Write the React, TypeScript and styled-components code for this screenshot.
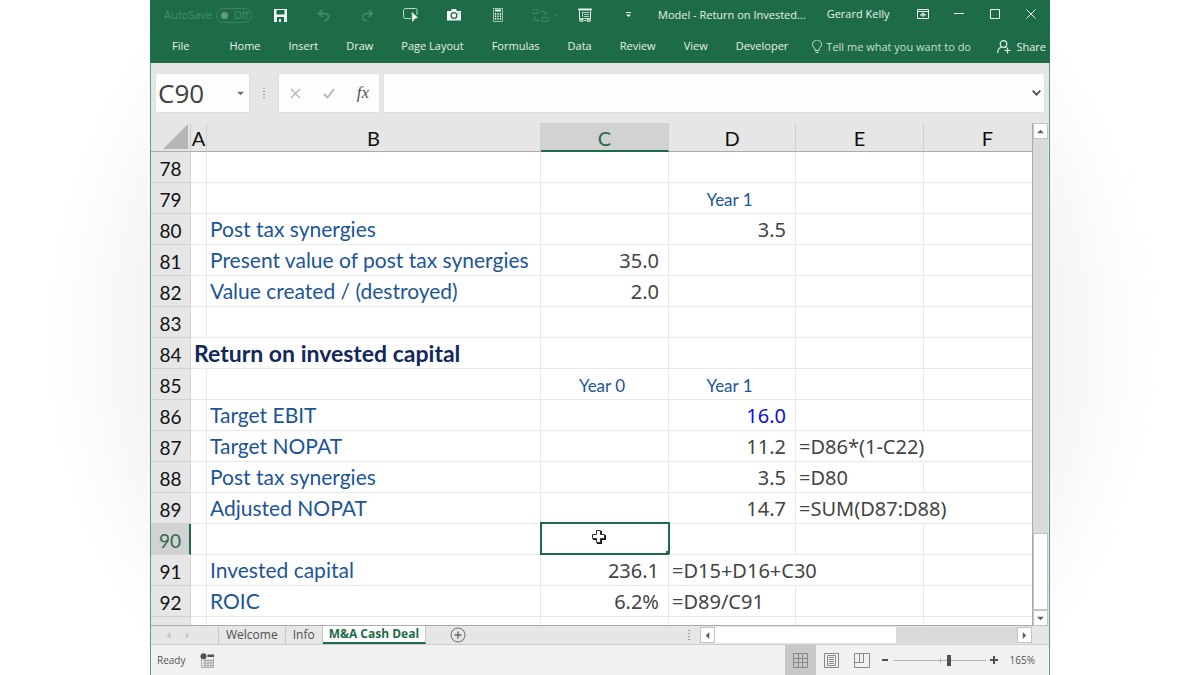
import React, { useState } from "react";
import styled, { createGlobalStyle, css } from "styled-components";

const green = "#1e6c47";
const chrome = "#e6e6e6";
const gridLine = "#e9e9e9";
const uiFont = '"Open Sans", "Noto Sans", sans-serif';
const cellFont = 'Lato, "Open Sans", sans-serif';
const numberFont = '"Noto Sans", "Open Sans", sans-serif';

const Global = createGlobalStyle`
  *, *::before, *::after { box-sizing: border-box; }
  body { margin: 0; background: #fff; font-family: ${uiFont}; }
  button, input { font: inherit; color: inherit; }
  button { margin: 0; padding: 0; border: 0; background: none; display: inline-flex; align-items: center; justify-content: center; }
`;

const Backdrop = styled.div`
  min-height: 100vh;
  display: flex;
  justify-content: center;
  background: radial-gradient(ellipse 47% 80% at 50% 50%, #f0f0f0 0%, #f4f4f4 80%, #f9f9f9 88%, #fdfdfd 94%, #fff 100%);
`;

const Window = styled.main`
  width: 75%;
  min-width: 900px;
  min-height: 100vh;
  display: flex;
  flex-direction: column;
  background: ${chrome};
  border: 1px solid #5c9a84;
  border-top: 0;
`;

/* ---------- title bar and ribbon tabs ---------- */

const Header = styled.header`
  margin: 0 -1px;
  padding: 0 1px;
  background: ${green};
  color: #e6f0ea;
  font-size: 11px;
  line-height: 16px;
`;

const TitleBar = styled.div`
  display: flex;
  align-items: center;
  height: 30px;
  padding-left: 13px;
`;

const AutoSave = styled.label`
  display: flex;
  align-items: center;
  gap: 4px;
  width: 106px;
  color: #4b8b6b;
`;

const Toggle = styled.span`
  display: flex;
  align-items: center;
  gap: 6px;
  width: 36px;
  height: 15px;
  padding-left: 4px;
  border: 1px solid #3c8160;
  border-radius: 8px;
  font-size: 10px;
  line-height: 12px;
`;

const ToggleInput = styled.input`
  appearance: none;
  margin: 0;
  width: 7px;
  height: 7px;
  border-radius: 50%;
  background: #639b7e;
`;

const QuickBar = styled.div`
  display: flex;
  justify-content: space-between;
  width: 368px;
`;

const QuickButton = styled.button<{ $dim?: boolean }>`
  width: 20px;
  height: 20px;
  color: ${(p) => (p.$dim ? "#4b8b6b" : "#f2f7f4")};
`;

const DocTitle = styled.span`
  margin-left: 20px;
  white-space: nowrap;
`;

const UserName = styled.span`
  margin: 0 auto 2px 21px;
  white-space: nowrap;
`;

const WindowButtons = styled.div`
  display: flex;
  gap: 16px;
  margin: 0 8px 3px 0;
`;

const RibbonTabs = styled.nav`
  display: flex;
  align-items: center;
  gap: 28px;
  height: 33px;
  padding: 0 3px 2px 21px;
`;

const RibbonTab = styled.button<{ $file?: boolean }>`
  white-space: nowrap;
  ${(p) => p.$file && css`margin-right: 12px;`}
`;

const TellMe = styled.button`
  gap: 4px;
  margin: 2px auto 0 -4px;
  white-space: nowrap;
  color: #c9dfd3;
`;

const Share = styled.button`
  gap: 5px;
  margin: 2px 0 0 -12px;
`;

/* ---------- formula bar ---------- */

const FormulaBar = styled.div`
  display: flex;
  height: 60px;
  padding: 10px 4px;
`;

const NameBox = styled.div`
  display: flex;
  align-items: center;
  width: 95px;
  background: #fdfdfd;
  border: 1px solid #e0e0e0;
`;

const NameInput = styled.input`
  width: 76px;
  padding: 0 0 0 2px;
  border: 0;
  outline: 0;
  background: none;
  color: #404040;
  font-size: 26px;
  line-height: 36px;
`;

const Grip = styled.div`
  display: flex;
  align-items: center;
  justify-content: center;
  width: 28px;
  color: #9b9b9b;
`;

const FormulaButtons = styled.div`
  display: flex;
  align-items: center;
  justify-content: space-between;
  width: 102px;
  padding: 0 7px;
  background: #fdfdfd;
  border: 1px solid #e0e0e0;
`;

const FormulaButton = styled.button`
  width: 18px;
  height: 24px;
  color: #b4b4b4;
`;

const NameArrow = styled(FormulaButton)`
  color: #707070;
`;

const FxButton = styled(FormulaButton)`
  color: #505050;
  font: italic 17px "Liberation Serif", serif;
`;

const FormulaField = styled.div`
  display: flex;
  align-items: center;
  flex: 1;
  margin-left: 3px;
  padding-right: 3px;
  background: #fdfdfd;
  border: 1px solid #e0e0e0;
`;

const FormulaInput = styled.input`
  flex: 1;
  padding: 0 6px;
  border: 0;
  outline: 0;
  background: none;
`;

/* ---------- sheet ---------- */

const SheetArea = styled.div`
  display: flex;
  flex: 1;
`;

const SheetPane = styled.div`
  flex: 1;
  overflow: hidden;
  background: #fff;
  border-bottom: 1px solid #ababab;
`;

/* The last column runs on under the vertical scroll bar. */
const Grid = styled.table`
  width: calc(100% + 20px);
  table-layout: fixed;
  border-collapse: separate;
  border-spacing: 0;
  font-family: ${cellFont};
  font-size: 20px;
  line-height: 26px;
`;

const Col = styled.col<{ $w?: number }>`
  ${(p) => p.$w && css`width: ${p.$w}px;`}
`;

const Corner = styled.td`
  padding: 0 2px 2px 0;
  background: ${chrome};
  border-right: 1px solid #cfcfcf;
  border-bottom: 1px solid #ababab;
  text-align: right;
  line-height: 0;
`;

const ColHead = styled.th<{ $on?: boolean }>`
  height: 29px;
  padding: 2px 0 0;
  line-height: 24px;
  font-weight: 400;
  color: ${(p) => (p.$on ? green : "#111")};
  background: ${(p) => (p.$on ? "#d2d2d2" : chrome)};
  border-right: 1px solid #d0d0d0;
  border-bottom: ${(p) => (p.$on ? `2px solid ${green}` : "1px solid #ababab")};
`;

const RowHead = styled.th<{ $on?: boolean }>`
  height: 31px;
  padding: 3px 0 0;
  font-weight: 400;
  font-size: 19px;
  color: ${(p) => (p.$on ? "#2d6a4e" : "#111")};
  background: ${(p) => (p.$on ? "#d2d2d2" : chrome)};
  border-right: ${(p) => (p.$on ? `2px solid ${green}` : "1px solid #d6d6d6")};
  border-bottom: 1px solid #d2d2d2;
`;

type Kind = "label" | "title" | "year" | "number" | "input" | "formula" | "empty";

const numeric = css`font: 400 20px/26px ${numberFont}; text-align: right; padding: 2px 9px 0 0;`;

const kinds = {
  label: css`color: #1c5597; font-size: 21px;`,
  title: css`color: #12285c; font-size: 23px; font-weight: 700;`,
  year: css`color: #1c5597; font-size: 17px; text-align: center; padding: 4px 5px 0 0;`,
  number: css`color: #444; ${numeric}`,
  input: css`color: #1010d0; ${numeric}`,
  formula: css`color: #444; font: 400 20px/26px ${numberFont}; padding-top: 2px;`,
  empty: css``,
};

const Cell = styled.td<{ $kind: Kind; $spill?: boolean }>`
  position: relative;
  padding: 0 0 0 3px;
  white-space: nowrap;
  border-right: 1px solid ${(p) => (p.$spill ? "transparent" : gridLine)};
  border-bottom: 1px solid ${gridLine};
  ${(p) => kinds[p.$kind]}
`;

const CutCell = styled.td<{ $head?: boolean }>`
  height: 8px;
  padding: 0;
  background: ${(p) => (p.$head ? chrome : "#fff")};
  border-right: 1px solid ${(p) => (p.$head ? "#d6d6d6" : gridLine)};
`;

const Selection = styled.div`
  position: absolute;
  inset: -2px -2px -1px -1px;
  border: 2px solid ${green};
  &::after {
    content: "";
    position: absolute;
    right: -2px;
    bottom: -2px;
    width: 4px;
    height: 4px;
    background: ${green};
  }
`;

const Pointer = styled.svg`
  position: absolute;
  left: 50px;
  top: 5px;
`;

/* ---------- scroll bars ---------- */

const VScroll = styled.div`
  display: flex;
  flex-direction: column;
  width: 17px;
  padding-right: 1px;
  border-left: 1px solid #ababab;
`;

const ScrollButton = styled.button`
  width: 15px;
  height: 16px;
  flex: none;
  background: #fff;
  border: 1px solid #c3c3c3;
  color: #606060;
`;

const VTrack = styled.div`
  display: flex;
  flex: 1;
  align-items: flex-end;
  background: #dadada;
`;

const VThumb = styled.div`
  width: 15px;
  height: 77px;
  background: #fff;
  border: 1px solid #c3c3c3;
`;

const HScroll = styled.div`
  display: flex;
  width: 332px;
  height: 16px;
  margin-right: 17px;
  background: #d9d9d9;
`;

const HThumb = styled.div`
  width: 181px;
  margin-right: auto;
  background: #fff;
`;

/* ---------- sheet tabs ---------- */

const TabBar = styled.div`
  display: flex;
  align-items: center;
  height: 19px;
  border-bottom: 1px solid #d0d0d0;
  color: #505050;
  font-size: 12px;
  line-height: 16px;
`;

const TabArrows = styled.div`
  display: flex;
  gap: 12px;
  width: 68px;
  height: 18px;
  padding-left: 14px;
  color: #c4c4c4;
  border-right: 1px solid #c6c6c6;
`;

const SheetTab = styled.button<{ $on?: boolean }>`
  height: 18px;
  padding: 0 7px;
  border-right: 1px solid #c6c6c6;
  white-space: nowrap;
  ${(p) =>
    p.$on &&
    css`
      padding: 0 6px;
      background: #fff;
      color: ${green};
      font-weight: 700;
      border-bottom: 2px solid ${green};
    `}
`;

const AddSheet = styled.button`
  margin: 0 auto 0 24px;
  color: #6a6a6a;
`;

const TabGrip = styled(Grip)`
  width: 12px;
  margin-right: 5px;
`;

/* ---------- status bar ---------- */

const StatusBar = styled.footer`
  display: flex;
  align-items: center;
  height: 30px;
  padding: 0 14px 0 6px;
  background: #f1f1f1;
  color: #555;
  font-size: 10px;
  line-height: 14px;
`;

const MacroButton = styled.button`
  margin: 0 auto 0 15px;
`;

const ViewButton = styled.button<{ $on?: boolean }>`
  width: 31px;
  height: 30px;
  color: #888;
  background: ${(p) => (p.$on ? "#c8c8c8" : "transparent")};
`;

const ZoomButton = styled.button`
  width: 16px;
  height: 20px;
`;

const ZoomSlider = styled.input`
  appearance: none;
  width: 92px;
  height: 11px;
  margin: 0;
  background:
    linear-gradient(#b0b0b0, #b0b0b0) 46px 50% / 1px 5px no-repeat,
    linear-gradient(#b0b0b0, #b0b0b0) 0 50% / 100% 1px no-repeat;
  &::-webkit-slider-thumb {
    appearance: none;
    width: 4px;
    height: 11px;
    background: #505050;
  }
`;

const ZoomLabel = styled.output`
  margin-left: 8px;
  white-space: nowrap;
`;

/* ---------- icons ---------- */

const Arrow = ({ dir, size = 7 }: { dir: "up" | "down" | "left" | "right"; size?: number }) => {
  const d = { up: "M0 6 4 2l4 4z", down: "M0 2h8L4 6z", left: "M6 0v8L2 4z", right: "M2 0v8l4-4z" }[dir];
  return (
    <svg width={size} height={size} viewBox="0 0 8 8" fill="currentColor">
      <path d={d} />
    </svg>
  );
};

const Dots = () => (
  <svg width="4" height="12" viewBox="0 0 4 12" fill="currentColor">
    <path d="M1 1h2v1H1zM1 4h2v1H1zM1 7h2v1H1zM1 10h2v1H1z" />
  </svg>
);

const SaveIcon = () => (
  <svg width="13" height="13" viewBox="0 0 13 13" fill="currentColor" fillRule="evenodd">
    <path d="M0 0h13v13H0zM2.500 1v4.500h8V1zM3 8v5h2v-3h2v3h3V8z" />
  </svg>
);

const UndoIcon = () => (
  <svg width="13" height="13" viewBox="0 0 13 13" fill="none" stroke="currentColor" strokeWidth="1.500">
    <path d="M5.500 1 1.500 4.500l4 3.500M2 4.500h5.500c5 0 5.500 6-.5 7.500" />
  </svg>
);

const RedoIcon = () => (
  <svg width="13" height="13" viewBox="0 0 13 13" fill="none" stroke="currentColor" strokeWidth="1.500">
    <path d="m7.500 1 4 3.500-4 3.500M11 4.500H5.500c-5 0-5.500 6 .5 7.500" />
  </svg>
);

const ShapeIcon = () => (
  <svg width="15" height="14" viewBox="0 0 15 14" fill="none" stroke="currentColor">
    <path d="M8 10.500H3C1 10.500.5 9.500.5 8V3C.5 1.500 1 .5 3 .5h9.500c1.500 0 1.500 1 1.500 2.500v4" opacity=".75" />
    <path d="m9 4.500 5.500 5-2.500.8L9.500 13.500z" fill="currentColor" stroke="currentColor" strokeWidth=".6" />
  </svg>
);

const CameraIcon = () => (
  <svg width="14" height="12" viewBox="0 0 14 12" fill="currentColor" fillRule="evenodd">
    <path d="M0 2h4l1-2h4l1 2h4v9.500H0zM7 3a3.500 3.500 0 1 0 0 7 3.500 3.500 0 0 0 0-7zm0 1.300a2.200 2.200 0 1 1 0 4.400 2.200 2.200 0 0 1 0-4.400zM11.500 3.500v1h1v-1z" />
  </svg>
);

const CalculatorIcon = () => (
  <svg width="10" height="14" viewBox="0 0 10 14" fill="none" stroke="currentColor">
    <path d="M.5.500h9v13h-9z" opacity=".6" />
    <path d="M2 2.500h6" strokeWidth="2" />
    <path d="M2.500 5v7M5 5v7M7.500 5v7" strokeWidth="1.300" strokeDasharray="1.700 .8" />
  </svg>
);

const RefreshIcon = () => (
  <svg width="27" height="15" viewBox="0 0 27 15" fill="none" stroke="currentColor" opacity=".75">
    <path d="M1 1.500h5v4H1zM3 8.500v4h3M9 3.500h4.500v3M11.500 4.500l2 2 2-2M10 9.500h6v4h-6zM5 10.500l2 2-2 2" />
    <path d="M22 6.500h4l-2 2z" fill="currentColor" stroke="none" />
  </svg>
);

const RefreshButton = styled(QuickButton)`
  & > svg {
    flex: none;
    margin-left: 9px;
  }
`;

const FormIcon = () => (
  <svg width="14" height="14" viewBox="0 0 14 14" fill="none" stroke="currentColor">
    <path d="M.5 1h13v1H.5z" fill="currentColor" />
    <path d="M1.500 3v7M12.500 3v7" />
    <path d="M4.500 4v5M4 4.500h7M6 6.500h5M6 8.500h5" opacity=".7" />
    <path d="M1 10.500h12M5.500 12.500h3" opacity=".8" />
    <path d="M1.800 11.300h3v1.900h-3zM9.200 11.300h3v1.900h-3z" />
  </svg>
);

const MoreIcon = () => (
  <svg width="5" height="6" viewBox="0 0 5 6" fill="currentColor">
    <path d="M0 0h5v1H0zM0 2.500h5L2.500 5z" />
  </svg>
);

const RibbonIcon = () => (
  <svg width="12" height="10" viewBox="0 0 12 10" fill="none" stroke="currentColor">
    <path d="M.5.500h11v9H.5zM.5 2.500h11M6 8V4M4 5.800l2-2 2 2M3 6h6" />
  </svg>
);

const MinimizeIcon = () => (
  <svg width="10" height="10" viewBox="0 0 10 10" stroke="currentColor">
    <path d="M0 4.500h10" />
  </svg>
);

const MaximizeIcon = () => (
  <svg width="10" height="10" viewBox="0 0 10 10" fill="none" stroke="currentColor">
    <path d="M.5.500h9v9h-9z" />
  </svg>
);

const CloseIcon = () => (
  <svg width="10" height="10" viewBox="0 0 10 10" stroke="currentColor">
    <path d="m.5.500 9 9M9.500.500l-9 9" />
  </svg>
);

const BulbIcon = () => (
  <svg width="10" height="14" viewBox="0 0 10 14" fill="none" stroke="currentColor">
    <path d="M3 10.500V9C2.500 7.800.5 6.500.5 4.500a4.300 4.300 0 0 1 9 0C9.500 6.500 7.500 7.800 7 9v1.500zM3.500 12.500h3" />
  </svg>
);

const ShareIcon = () => (
  <svg width="14" height="14" viewBox="0 0 14 14" fill="none" stroke="currentColor" strokeWidth="1.200">
    <circle cx="6.500" cy="4" r="3.300" />
    <path d="M.7 13c0-3.500 1.800-5.500 4-6M8 7l1.200.8M10.500 7.500v6M7.500 10.500h6" />
  </svg>
);

const CancelIcon = () => (
  <svg width="11" height="11" viewBox="0 0 11 11" stroke="currentColor" strokeWidth="1.300">
    <path d="m1 1 9 9M10 1l-9 9" />
  </svg>
);

const EnterIcon = () => (
  <svg width="12" height="11" viewBox="0 0 12 11" fill="none" stroke="currentColor" strokeWidth="1.800">
    <path d="m1 6 3.500 3.500L11 1" />
  </svg>
);

const ChevronIcon = () => (
  <svg width="9" height="6" viewBox="0 0 9 6" fill="none" stroke="#505050" strokeWidth="1.800">
    <path d="m.7.700 3.800 4 3.800-4" />
  </svg>
);

const CornerIcon = () => (
  <svg width="25" height="25" viewBox="0 0 25 25">
    <path d="M25 0v25H0z" fill="#b5b5b5" />
  </svg>
);

const PlusIcon = () => (
  <svg width="16" height="16" viewBox="0 0 16 16" fill="none" stroke="currentColor">
    <circle cx="8" cy="8" r="7" />
    <path d="M4.500 8h7M8 4.500v7" strokeWidth="1.500" />
  </svg>
);

const MacroIcon = () => (
  <svg width="15" height="15" viewBox="0 0 15 15" fill="none" stroke="#8a8a8a">
    <path d="M1.500 6v8.500h12V5M3 7.500h10M3 10h10M3 12.500h10M5 6v8M8 6v8M11 6v8" strokeWidth=".7" />
    <circle cx="3.500" cy="3.300" r="3" fill="#505050" stroke="none" />
    <path d="M7.500 1.500H14V4H7.500z" fill="#505050" stroke="none" />
  </svg>
);

const NormalViewIcon = () => (
  <svg width="15" height="15" viewBox="0 0 15 15" fill="none" stroke="currentColor">
    <path d="M.5.500h14v14H.5zM.5 5.500h14M.5 9.500h14M5.500.500v14M9.500.500v14" />
  </svg>
);

const PageViewIcon = () => (
  <svg width="15" height="15" viewBox="0 0 15 15" fill="none" stroke="currentColor">
    <path d="M.5.500h14v14H.5zM3.500 2.500h8v10h-8zM5 4.500h5M5 6.500h5M5 8.500h5M5 10.500h5" />
  </svg>
);

const BreakViewIcon = () => (
  <svg width="16" height="15" viewBox="0 0 16 15" fill="none" stroke="currentColor">
    <path d="M.5.500h15v14H.5zM.5 9.500h9v-9M5.500.500v9" />
  </svg>
);

const MinusSign = () => (
  <svg width="7" height="8" viewBox="0 0 7 8" stroke="#505050" strokeWidth="2">
    <path d="M0 4h6" />
  </svg>
);

const PlusSign = () => (
  <svg width="8" height="8" viewBox="0 0 8 8" stroke="#505050" strokeWidth="2">
    <path d="M0 4h8M4 0v8" />
  </svg>
);

/* ---------- data ---------- */

const columns = ["A", "B", "C", "D", "E", "F"];
const columnWidths = [16, 334, 128, 127, 128, undefined];
const ribbon = ["File", "Home", "Insert", "Draw", "Page Layout", "Formulas", "Data", "Review", "View", "Developer"];

type Entry = { text: string; kind: Kind; spill?: boolean };
const rows: Record<number, Record<string, Entry>> = {
  79: { D: { text: "Year 1", kind: "year" } },
  80: { B: { text: "Post tax synergies", kind: "label" }, D: { text: "3.5", kind: "number" } },
  81: { B: { text: "Present value of post tax synergies", kind: "label" }, C: { text: "35.0", kind: "number" } },
  82: { B: { text: "Value created / (destroyed)", kind: "label" }, C: { text: "2.0", kind: "number" } },
  84: { A: { text: "Return on invested capital", kind: "title", spill: true } },
  85: { C: { text: "Year 0", kind: "year" }, D: { text: "Year 1", kind: "year" } },
  86: { B: { text: "Target EBIT", kind: "label" }, D: { text: "16.0", kind: "input" } },
  87: {
    B: { text: "Target NOPAT", kind: "label" },
    D: { text: "11.2", kind: "number" },
    E: { text: "=D86*(1-C22)", kind: "formula", spill: true },
  },
  88: {
    B: { text: "Post tax synergies", kind: "label" },
    D: { text: "3.5", kind: "number" },
    E: { text: "=D80", kind: "formula" },
  },
  89: {
    B: { text: "Adjusted NOPAT", kind: "label" },
    D: { text: "14.7", kind: "number" },
    E: { text: "=SUM(D87:D88)", kind: "formula", spill: true },
  },
  91: {
    B: { text: "Invested capital", kind: "label" },
    C: { text: "236.1", kind: "number" },
    D: { text: "=D15+D16+C30", kind: "formula", spill: true },
  },
  92: {
    B: { text: "ROIC", kind: "label" },
    C: { text: "6.2%", kind: "number" },
    D: { text: "=D89/C91", kind: "formula" },
  },
};
const rowNumbers = Array.from({ length: 15 }, (_, i) => 78 + i);

export default function App() {
  const [name, setName] = useState("C90");
  const [formula, setFormula] = useState("");
  const [zoom, setZoom] = useState(61);
  const [autoSave, setAutoSave] = useState(false);

  return (
    <Backdrop>
      <Global />
      <Window>
        <Header>
          <TitleBar>
            <AutoSave>
              AutoSave
              <Toggle>
                <ToggleInput type="checkbox" checked={autoSave} onChange={(e) => setAutoSave(e.target.checked)} />
                Off
              </Toggle>
            </AutoSave>
            <QuickBar>
              <QuickButton aria-label="Save"><SaveIcon /></QuickButton>
              <QuickButton $dim aria-label="Undo"><UndoIcon /></QuickButton>
              <QuickButton $dim aria-label="Redo"><RedoIcon /></QuickButton>
              <QuickButton aria-label="Select objects"><ShapeIcon /></QuickButton>
              <QuickButton aria-label="Camera"><CameraIcon /></QuickButton>
              <QuickButton aria-label="Calculator"><CalculatorIcon /></QuickButton>
              <RefreshButton $dim aria-label="Refresh"><RefreshIcon /></RefreshButton>
              <QuickButton aria-label="Form"><FormIcon /></QuickButton>
              <QuickButton aria-label="Customize toolbar"><MoreIcon /></QuickButton>
            </QuickBar>
            <DocTitle>Model - Return on Invested...</DocTitle>
            <UserName>Gerard Kelly</UserName>
            <WindowButtons>
              <QuickButton aria-label="Ribbon display options"><RibbonIcon /></QuickButton>
              <QuickButton aria-label="Minimize"><MinimizeIcon /></QuickButton>
              <QuickButton aria-label="Maximize"><MaximizeIcon /></QuickButton>
              <QuickButton aria-label="Close"><CloseIcon /></QuickButton>
            </WindowButtons>
          </TitleBar>
          <RibbonTabs>
            {ribbon.map((t) => (
              <RibbonTab key={t} $file={t === "File"}>{t}</RibbonTab>
            ))}
            <TellMe><BulbIcon />Tell me what you want to do</TellMe>
            <Share><ShareIcon />Share</Share>
          </RibbonTabs>
        </Header>

        <FormulaBar>
          <NameBox>
            <NameInput aria-label="Name box" value={name} onChange={(e) => setName(e.target.value)} />
            <NameArrow aria-label="Open name list"><Arrow dir="down" /></NameArrow>
          </NameBox>
          <Grip><Dots /></Grip>
          <FormulaButtons>
            <FormulaButton aria-label="Cancel"><CancelIcon /></FormulaButton>
            <FormulaButton aria-label="Enter"><EnterIcon /></FormulaButton>
            <FxButton aria-label="Insert function">fx</FxButton>
          </FormulaButtons>
          <FormulaField>
            <FormulaInput aria-label="Formula" value={formula} onChange={(e) => setFormula(e.target.value)} />
            <button aria-label="Expand formula bar"><ChevronIcon /></button>
          </FormulaField>
        </FormulaBar>

        <SheetArea>
          <SheetPane>
            <Grid>
              <colgroup>
                <Col $w={40} />
                {columns.map((c, i) => <Col key={c} $w={columnWidths[i]} />)}
              </colgroup>
              <thead>
                <tr>
                  <Corner><CornerIcon /></Corner>
                  {columns.map((c) => <ColHead key={c} $on={c === "C"}>{c}</ColHead>)}
                </tr>
              </thead>
              <tbody>
                {rowNumbers.map((n) => (
                  <tr key={n}>
                    <RowHead $on={n === 90}>{n}</RowHead>
                    {columns.map((c) => {
                      const entry = rows[n]?.[c];
                      return (
                        <Cell key={c} $kind={entry?.kind ?? "empty"} $spill={entry?.spill}>
                          {entry?.text}
                          {n === 90 && c === "C" && (
                            <>
                              <Selection />
                              <Pointer width="16" height="16" viewBox="0 0 16 16">
                                <path d="M6 2h5v4h4v5h-4v4H6v-4H2V6h4z" fill="#111" />
                                <path d="M5.500 1.500h4v4h4v4h-4v4h-4v-4h-4v-4h4z" fill="#fff" stroke="#333" />
                              </Pointer>
                            </>
                          )}
                        </Cell>
                      );
                    })}
                  </tr>
                ))}
                <tr>
                  <CutCell $head />
                  {columns.map((c) => <CutCell key={c} />)}
                </tr>
              </tbody>
            </Grid>
          </SheetPane>
          <VScroll>
            <ScrollButton aria-label="Scroll up"><Arrow dir="up" /></ScrollButton>
            <VTrack><VThumb /></VTrack>
            <ScrollButton aria-label="Scroll down"><Arrow dir="down" /></ScrollButton>
          </VScroll>
        </SheetArea>

        <TabBar>
          <TabArrows>
            <button aria-label="Previous sheet"><Arrow dir="left" /></button>
            <button aria-label="Next sheet"><Arrow dir="right" /></button>
          </TabArrows>
          <SheetTab>Welcome</SheetTab>
          <SheetTab>Info</SheetTab>
          <SheetTab $on>M&amp;A Cash Deal</SheetTab>
          <AddSheet aria-label="New sheet"><PlusIcon /></AddSheet>
          <TabGrip><Dots /></TabGrip>
          <HScroll>
            <ScrollButton aria-label="Scroll left"><Arrow dir="left" /></ScrollButton>
            <HThumb />
            <ScrollButton aria-label="Scroll right"><Arrow dir="right" /></ScrollButton>
          </HScroll>
        </TabBar>

        <StatusBar>
          Ready
          <MacroButton aria-label="Record macro"><MacroIcon /></MacroButton>
          <ViewButton $on aria-label="Normal view"><NormalViewIcon /></ViewButton>
          <ViewButton aria-label="Page layout view"><PageViewIcon /></ViewButton>
          <ViewButton aria-label="Page break preview"><BreakViewIcon /></ViewButton>
          <ZoomButton aria-label="Zoom out"><MinusSign /></ZoomButton>
          <ZoomSlider type="range" aria-label="Zoom" value={zoom} onChange={(e) => setZoom(Number(e.target.value))} />
          <ZoomButton aria-label="Zoom in"><PlusSign /></ZoomButton>
          <ZoomLabel>165%</ZoomLabel>
        </StatusBar>
      </Window>
    </Backdrop>
  );
}
